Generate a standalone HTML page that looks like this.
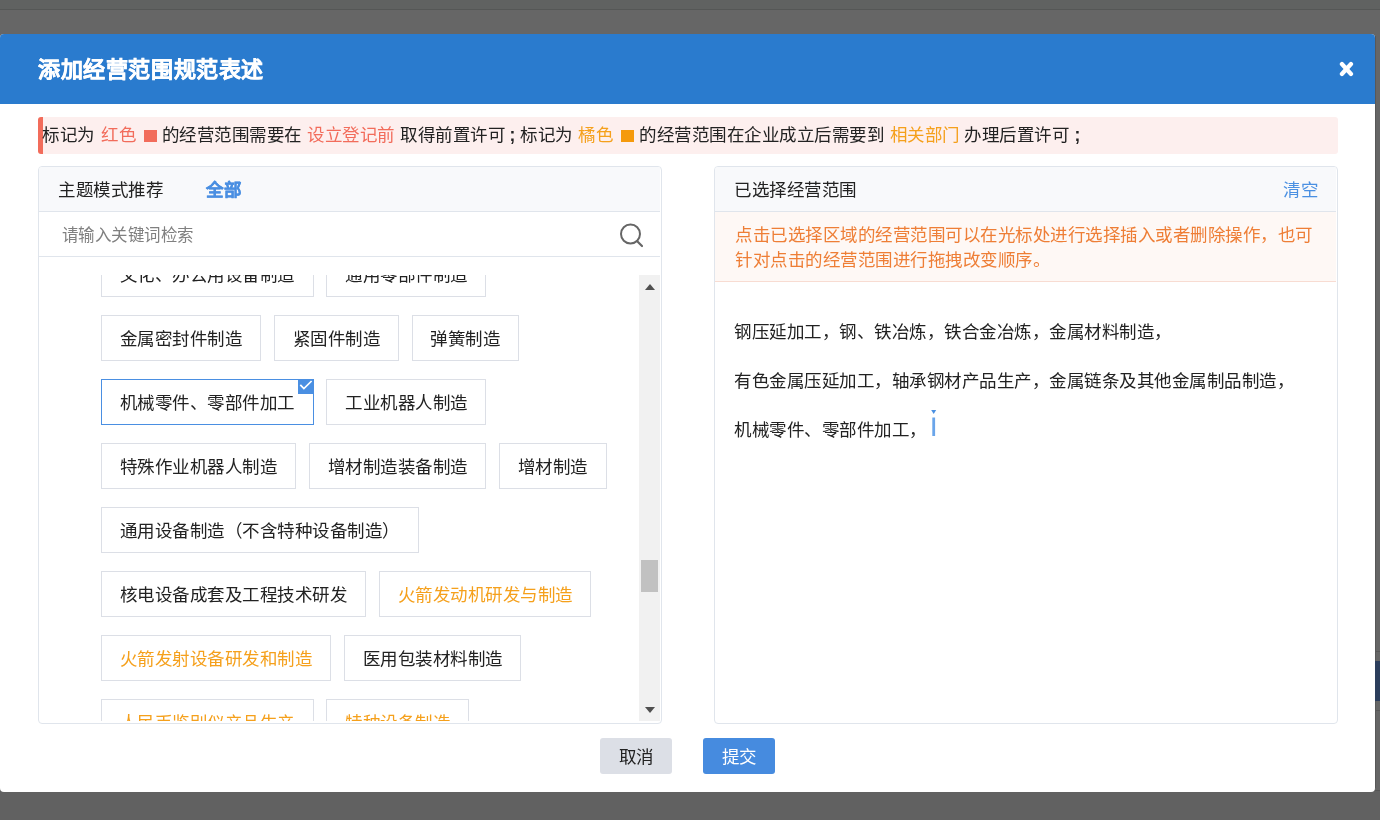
<!DOCTYPE html>
<html lang="zh-CN">
<head>
<meta charset="utf-8">
<style>
*{margin:0;padding:0;box-sizing:border-box;}
html,body{width:1380px;height:820px;overflow:hidden;}
body{position:relative;background:#666666;font-family:"Liberation Sans",sans-serif;color:#222;letter-spacing:0.5px;}
.abs{position:absolute;}
#topstrip{left:0;top:0;width:1380px;height:9px;background:#606261;}
#topline{left:0;top:9px;width:1380px;height:1px;background:#555756;}
#rblue{left:1375px;top:661px;width:5px;height:40px;background:#2c3e5c;}
#modal{left:0;top:34px;width:1375px;height:758px;background:#fff;border-radius:4px;overflow:hidden;will-change:transform;}
#hdr{left:0;top:0;width:1375px;height:70px;background:#2a7bce;}
#title{left:38px;top:20.5px;font-size:22px;letter-spacing:0.6px;-webkit-text-stroke:0.4px #fff;line-height:30px;font-weight:bold;color:#fff;white-space:nowrap;}
#close{left:1339px;top:27px;width:15px;height:16px;}
#notice{left:38px;top:83px;width:1300px;height:37px;background:#fdefee;border-left:5px solid #f26c5b;border-radius:3px;font-size:17.5px;line-height:37px;white-space:nowrap;color:#222;}
.red{color:#f26c5b;}
.org{color:#f5a01c;}
.sqa{top:12.5px;width:12.5px;height:12px;}
.nr{top:0;}
.semi{font-family:"Liberation Sans",sans-serif;font-weight:bold;}
.panel{top:132px;height:558px;border:1px solid #e0e5ec;border-radius:4px;overflow:hidden;background:#fff;}
#lp{left:38px;width:624px;}
#rp{left:714px;width:624px;}
.ph{left:0;top:0;width:621px;height:45px;background:#f8f9fb;border-bottom:1px solid #e0e5ec;font-size:17.5px;line-height:44px;white-space:nowrap;}
.list{left:0;top:108px;width:622px;height:446px;overflow:hidden;}
.row{left:62px;white-space:nowrap;font-size:0;}
.tag{display:inline-block;height:45.5px;line-height:43.5px;padding-top:1.5px !important;border:1px solid #dcdfe6;padding:0 17.85px 0 17.85px;margin-right:12.6px;font-size:17.5px;color:#222;background:#fff;position:relative;}
.tag.o{color:#f5a01c;}
.tag.sel{border-color:#4a8fe2;}
.chk{position:absolute;right:-1px;top:-1px;width:16px;height:15px;background:#4a8fe2;}
</style>
</head>
<body>
<div id="topstrip" class="abs"></div>
<div id="topline" class="abs"></div>
<div class="abs" style="left:1375px;top:36px;width:1px;height:752px;background:#585858"></div>
<div id="rblue" class="abs"></div>
<div class="abs" style="left:1375px;top:651px;width:5px;height:1px;background:#585858"></div>
<div class="abs" style="left:1375px;top:710px;width:5px;height:1px;background:#585858"></div>
<div class="abs" style="left:0;top:790px;width:1380px;height:30px;background:#616161"></div>
<div class="abs" style="left:1372px;top:790px;width:8px;height:1px;background:#555"></div>
<div id="modal" class="abs">
  <div id="hdr" class="abs">
    <div id="title" class="abs">添加经营范围规范表述</div>
    <svg id="close" class="abs" width="15" height="16" viewBox="0 0 15 16"><path d="M2.9 3L12 13M12 3L2.9 13" stroke="#fff" stroke-width="4.2" stroke-linecap="round"/></svg>
  </div>
  <div id="notice" class="abs"><span id="n0" class="abs nr" style="left:-0.6px">标记为</span><span id="n1" class="abs nr red" style="left:58.3px">红色</span><span class="abs sqa" style="left:101.0px;background:#f26c5b"></span><span id="n3" class="abs nr" style="left:118.5px">的经营范围需要在</span><span id="n4" class="abs nr red" style="left:264.1px">设立登记前</span><span id="n5" class="abs nr" style="left:357.3px">取得前置许可</span><span id="n6" class="abs nr semi" style="left:466.6px">;</span><span id="n7" class="abs nr" style="left:477.0px">标记为</span><span id="n8" class="abs nr org" style="left:535.3px">橘色</span><span class="abs sqa" style="left:578.3px;background:#f59a0c"></span><span id="n10" class="abs nr" style="left:596.3px">的经营范围在企业成立后需要到</span><span id="n11" class="abs nr org" style="left:846.5px">相关部门</span><span id="n12" class="abs nr" style="left:921.1px">办理后置许可</span><span id="n13" class="abs nr semi" style="left:1031.4px">;</span></div>

  <div id="lp" class="abs panel">
    <div class="abs ph"><span class="abs" style="left:19px;top:0.7px">主题模式推荐</span><span class="abs" style="left:167px;top:1.2px;color:#4a8fe2;font-weight:bold;-webkit-text-stroke:0.3px #4a8fe2">全部</span></div>
    <div class="abs" style="left:0;top:45px;width:621px;height:45px;border-bottom:1px solid #e0e5ec;">
      <span class="abs" style="left:22.5px;top:1.2px;font-size:16.5px;line-height:44px;color:#808080;white-space:nowrap;letter-spacing:-0.5px">请输入关键词检索</span>
      <svg class="abs" style="left:578px;top:10px" width="26" height="26" viewBox="0 0 26 26"><circle cx="13.5" cy="12" r="9.5" fill="none" stroke="#666" stroke-width="2"/><path d="M20 19L25 24" stroke="#666" stroke-width="2.2" stroke-linecap="round"/></svg>
    </div>
    <div class="abs list">
      <div class="abs row" style="top:-24px"><span class="tag">文化、办公用设备制造</span><span class="tag">通用零部件制造</span></div>
      <div class="abs row" style="top:40px"><span class="tag">金属密封件制造</span><span class="tag">紧固件制造</span><span class="tag">弹簧制造</span></div>
      <div class="abs row" style="top:104px"><span class="tag sel">机械零件、零部件加工<span class="chk"><svg width="16" height="15" viewBox="0 0 16 15" style="display:block"><path d="M2.3 5.8L5.9 9.6L13.6 2" fill="none" stroke="#fff" stroke-width="1.7"/></svg></span></span><span class="tag">工业机器人制造</span></div>
      <div class="abs row" style="top:168px"><span class="tag">特殊作业机器人制造</span><span class="tag">增材制造装备制造</span><span class="tag">增材制造</span></div>
      <div class="abs row" style="top:232px"><span class="tag">通用设备制造（不含特种设备制造）</span></div>
      <div class="abs row" style="top:296px"><span class="tag">核电设备成套及工程技术研发</span><span class="tag o">火箭发动机研发与制造</span></div>
      <div class="abs row" style="top:360px"><span class="tag o">火箭发射设备研发和制造</span><span class="tag">医用包装材料制造</span></div>
      <div class="abs row" style="top:424px"><span class="tag o">人民币鉴别仪产品生产</span><span class="tag o">特种设备制造</span></div>
      <div class="abs" style="left:600px;top:0px;width:21px;height:446px;background:#f1f1f1;">
        <svg class="abs" style="left:5.5px;top:8.7px" width="10" height="6" viewBox="0 0 10 6"><path d="M0 6L5 0L10 6Z" fill="#505050"/></svg>
        <div class="abs" style="left:2px;top:285px;width:17px;height:32px;background:#c1c1c1;"></div>
        <svg class="abs" style="left:5.5px;top:431.5px" width="10" height="6" viewBox="0 0 10 6"><path d="M0 0L10 0L5 6Z" fill="#505050"/></svg>
      </div>
    </div>
  </div>

  <div id="rp" class="abs panel">
    <div class="abs ph"><span class="abs" style="left:19px;top:1px">已选择经营范围</span><span class="abs" style="right:18px;top:1px;color:#4a90e2">清空</span></div>
    <div class="abs" style="left:0;top:45px;width:621px;height:70px;background:#fef8f5;border-bottom:1px solid #f8dcd2;color:#ee7e36;font-size:17.5px;line-height:25px;padding:11px 19px 0 20px;">点击已选择区域的经营范围可以在光标处进行选择插入或者删除操作，也可针对点击的经营范围进行拖拽改变顺序。</div>
    <div class="abs" style="left:19px;top:141.3px;font-size:17.5px;line-height:49px;white-space:nowrap;color:#222;">
      钢压延加工，钢、铁冶炼，铁合金冶炼，金属材料制造，<br>有色金属压延加工，轴承钢材产品生产，金属链条及其他金属制品制造，<br>机械零件、零部件加工，
    </div>
    <svg class="abs" style="left:216px;top:243px" width="6" height="27" viewBox="0 0 6 27"><path d="M0.2 0H5.2L2.7 4Z" fill="#4a90e2"/><rect x="1.3" y="7.5" width="2.8" height="18.5" fill="#6aa5ea"/></svg>
  </div>

  <div class="abs" style="left:600px;top:704px;width:72px;height:36px;background:#dcdfe6;border-radius:3px;font-size:17.5px;line-height:36px;padding-left:0.5px;text-align:center;color:#222;"><span style="position:relative;top:1px">取消</span></div>
  <div class="abs" style="left:703px;top:704px;width:72px;height:36px;background:#468bdf;border-radius:3px;font-size:17.5px;line-height:36px;padding-left:0.5px;text-align:center;color:#fff;"><span style="position:relative;top:1px">提交</span></div>
</div>
</body>
</html>
